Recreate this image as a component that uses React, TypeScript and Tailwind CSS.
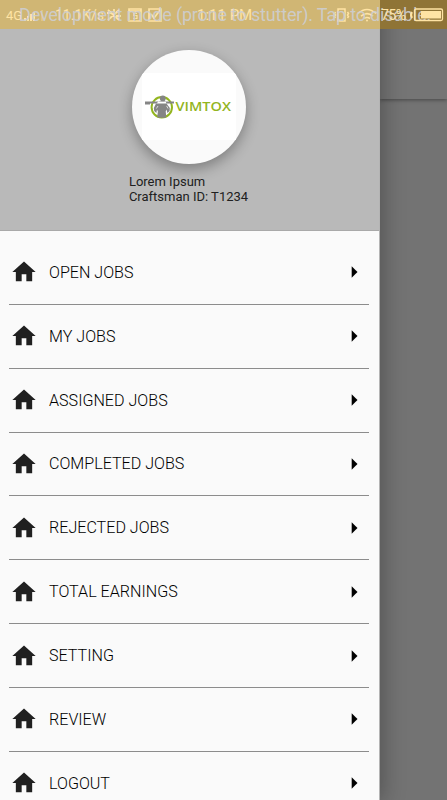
import React from 'react';
import { MdHome, MdArrowRight } from 'react-icons/md';

const items = [
    'OPEN JOBS',
    'MY JOBS',
    'ASSIGNED JOBS',
    'COMPLETED JOBS',
    'REJECTED JOBS',
    'TOTAL EARNINGS',
    'SETTING',
    'REVIEW',
    'LOGOUT',
];

const Logo = () => (
    <svg width="29" height="24" viewBox="0 0 29 24">
        <circle cx="16.8" cy="12.3" r="10.2" fill="none" stroke="#93b51f" strokeWidth="2" />
        <circle cx="17.8" cy="3.4" r="2.9" fill="#858585" />
        <path
            d="M0 6.4h29v2H0zM0 7h5v2.4H0zM11 8.4L8.8 13l.4 3 2.2 2 .6-3.5.9 2-.8 5.4 2 .8h6.2l1-.8-.6-5.4.9-2 .8 3.5 2.2-2 .2-3L21.5 8.4 20.5 6h-6z"
            fill="#858585"
        />
        <path d="M11.4 13.5l1.6-2.5M23 13.5l-1.4-2.6" stroke="#fff" strokeWidth=".7" />
    </svg>
);

const StatusBar = () => (
    <div className="absolute inset-x-0 top-0 z-20 h-[29px] overflow-hidden whitespace-nowrap">
        <div className="flex h-full">
            <div className="w-[380px] bg-[#d0b674]" />
            <div className="flex-1 bg-[#8f7436]" />
        </div>
        <div className="absolute inset-0 text-[13px] leading-[30px] text-[#ffe4a4]">
            <span className="absolute top-px left-[6px] text-[13px]">4G</span>
            <svg className="absolute top-[10px] left-[24px]" width="24" height="11" fill="#ffe4a4">
                <path d="M0 8h2v3H0zM3 6h2v5H3zM6 4h2v7H6zM9 2h2v9H9z" />
                <path d="M17 0h2v11h-2z" opacity=".3" />
            </svg>
            <span className="absolute left-[55px] text-[14px]">11.1K/s</span>
            <svg className="absolute top-[8px] left-[106px]" width="16" height="14" fill="none" stroke="#ffe4a4" strokeWidth="1.8">
                <path d="M2 2l11 10M13 2L2 12M1 5h4M10 8h5M8 1v3" />
            </svg>
            <svg className="absolute top-[8px] left-[128px]" width="14" height="14" fill="none" stroke="#ffe4a4" strokeWidth="1.7">
                <path d="M1 1h12v12H1zM1 3h12" />
                <path d="M9 5.5H6v2h3v3H5.5" strokeWidth="1.2" />
            </svg>
            <svg className="absolute top-[8px] left-[148px]" width="14" height="14" fill="none" stroke="#ffe4a4" strokeWidth="1.7">
                <path d="M1 1h12v12H1zM3 6l3 4 6-8" />
            </svg>
            <span className="absolute left-[197px] text-[15px]">1:11 PM</span>
            <svg className="absolute top-[8px] left-[333px]" width="18" height="14" fill="none" stroke="#ffe4a4" strokeWidth="1.5">
                <path d="M5 1h7v12H5zM2.5 4l-1 1.5 1 1.5-1 1.5 1 1.5M14.5 4l1 1.5-1 1.5 1 1.5-1 1.5" />
            </svg>
            <svg className="absolute top-[8px] left-[357px]" width="20" height="14" fill="none" stroke="#ffe4a4" strokeWidth="1.6">
                <path d="M1 5.5q9-8 18 0M4 8.2q6-5 12 0M7 10.5q3-2 6 0" />
                <circle cx="10" cy="12.5" r="1" fill="#ffe4a4" stroke="none" />
            </svg>
        </div>
        <div className="absolute top-[4px] left-[19px] text-[18px] leading-[22px] tracking-[-0.18px] text-[#cdced3]/90">
            Development mode (prone to stutter). Tap to disable.
        </div>
        <div className="absolute inset-0 text-[14px] leading-[30px] tracking-[-0.5px] text-[#ffe4a4]">
            <span className="absolute left-[381px]">75%</span>
            <svg className="absolute top-[8px] left-[408px]" width="36" height="14" fill="none" stroke="#ffe4a4">
                <path d="M4 4q-2 3 0 6" strokeWidth="2" />
                <rect x="6.5" y="1" width="28" height="11.5" rx="1.5" strokeWidth="1.3" />
                <path d="M13 3h20v7.5H13z" fill="#ffe4a4" stroke="none" />
            </svg>
        </div>
    </div>
);

const App = () => {
    return (
        <div className="relative flex h-[800px] w-full overflow-hidden bg-[#737373] font-['Roboto',sans-serif] text-[#202020]">
            <aside className="z-10 flex w-[380px] shrink-0 flex-col border-r border-[#b4b4b4] bg-[#fafafa] shadow-[0_0_22px_2px_rgba(0,0,0,0.3)]">
                <header className="flex h-[231px] shrink-0 flex-col items-center border-b border-[#a9a9a9] bg-[#b9b9b9] pt-[49.5px] pr-px">
                    <div className="flex size-[114px] items-center justify-center overflow-hidden rounded-full bg-[#fafafa] shadow-[0_5px_14px_rgba(0,0,0,0.32)]">
                        <div className="flex h-[67px] w-[94px] items-center bg-white pl-[3px]">
                            <Logo />
                            <svg width="58" height="20">
                                <text
                                    x="1.5"
                                    y="14"
                                    textLength="55.5"
                                    lengthAdjust="spacingAndGlyphs"
                                    className="fill-[#93b51f] font-['Open_Sans',sans-serif] text-[13px] font-semibold"
                                >
                                    VIMTOX
                                </text>
                            </svg>
                        </div>
                    </div>
                    <div className="mt-[10.5px] -ml-px text-[13px] leading-[15px]">
                        <p>Lorem Ipsum</p>
                        <p>Craftsman ID: T1234</p>
                    </div>
                </header>
                <nav className="pt-[10px] pr-[10px] pl-[9px]">
                    {items.map((item) => (
                        <div
                            key={item}
                            className="flex h-[63.86px] items-center border-b border-[#8c8c8c]"
                        >
                            <MdHome className="ml-[0.5px] size-[28px] shrink-0" />
                            <span className="ml-[11.5px] flex-1 pt-px text-[16.1px] font-light text-black">
                                {item}
                            </span>
                            <MdArrowRight className="mr-px size-[28px] shrink-0 text-black" />
                        </div>
                    ))}
                </nav>
            </aside>
            <main className="flex-1">
                <div className="h-[99px] bg-[#757575] shadow-[0_1px_4px_rgba(0,0,0,0.4)]" />
            </main>
            <StatusBar />
        </div>
    );
};

export default App;
